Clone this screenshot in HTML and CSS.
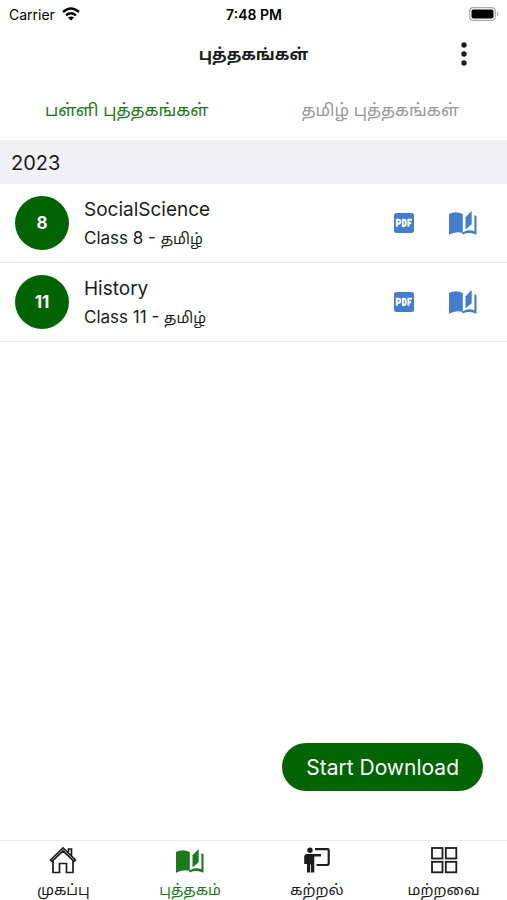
FILE: index.html
```html
<!DOCTYPE html>
<html lang="ta">
<head>
<meta charset="utf-8">
<meta name="viewport" content="width=device-width, initial-scale=1">
<title>புத்தகங்கள்</title>
<link rel="stylesheet" href="styles.css">
</head>
<body>
<svg class="defs" aria-hidden="true">
  <symbol id="book" viewBox="0 0 28 24">
    <path d="M0 3Q6.500 -.5 13.800 3V22Q7 19.700 0 23.800Z"/>
    <path d="M13 21.500L15 20.800Q20 18.200 25.400 20.200V4.300L27.500 5V23.800Q20.500 20.500 13.700 23.500Z"/>
    <path d="M16.500 6.200L22.700 0V13.200L16.500 18.500Z"/>
  </symbol>
  <symbol id="pdf" viewBox="0 0 20 20">
    <rect width="20" height="20" rx="2.500"/>
    <path d="M2.800 13.800V6.800H4.700Q6.300 6.800 6.300 8.800Q6.300 10.800 4.700 10.800H2.800M8.800 6.800V13H9.800Q11.700 13 11.700 10.900V8.900Q11.700 6.800 9.800 6.800ZM14.400 13.800V6.800H18M14.400 10.300H17.200" fill="none" stroke="#fff" stroke-width="1.900"/>
  </symbol>
</svg>
<div class="app">
  <div class="status">
    <div class="carrier">Carrier
      <svg class="wifi" viewBox="0 0 18 14" aria-hidden="true"><g fill="none" stroke="#000" stroke-width="2.400"><path d="M1 5Q9-2 17 5"/><path d="M4 8.300Q9 4 14 8.300"/></g><path d="M6 10.600Q9 8.300 12 10.600L9 13.600Z"/></svg>
    </div>
    <time>7:48 PM</time>
    <svg class="battery" viewBox="0 0 30 14" aria-hidden="true"><rect x=".7" y=".7" width="25.600" height="12.600" rx="3.500" fill="#fff" stroke="#aaa" stroke-width="1.200"/><rect x="2.500" y="2.500" width="22" height="9" rx="1.800"/><path d="M28 4.500Q31 7 28 9.500Z" fill="#aaa"/></svg>
  </div>
  <header class="header">
    <h1>புத்தகங்கள்</h1>
    <button class="more" aria-label="More"><svg viewBox="0 0 6 24" aria-hidden="true"><circle cx="3" cy="3" r="2.700"/><circle cx="3" cy="12" r="2.700"/><circle cx="3" cy="21" r="2.700"/></svg></button>
  </header>
  <nav class="tabs">
    <a class="active" href="#school">பள்ளி புத்தகங்கள்</a>
    <a href="#tamil">தமிழ் புத்தகங்கள்</a>
  </nav>
  <main>
    <h2>2023</h2>
    <ul>
      <li>
        <span class="badge">8</span>
        <div class="info"><h3>SocialScience</h3><p>Class 8 - <span class="ta">தமிழ்</span></p></div>
        <button class="pdf" aria-label="PDF"><svg viewBox="0 0 20 20"><use href="#pdf"/></svg></button>
        <button class="read" aria-label="Read"><svg viewBox="0 0 28 24"><use href="#book"/></svg></button>
      </li>
      <li>
        <span class="badge">11</span>
        <div class="info"><h3>History</h3><p>Class 11 - <span class="ta">தமிழ்</span></p></div>
        <button class="pdf" aria-label="PDF"><svg viewBox="0 0 20 20"><use href="#pdf"/></svg></button>
        <button class="read" aria-label="Read"><svg viewBox="0 0 28 24"><use href="#book"/></svg></button>
      </li>
    </ul>
  </main>
  <button class="download">Start Download</button>
  <nav class="bottom">
    <a href="#home"><svg viewBox="0 0 28 28" aria-hidden="true"><path d="M1.500 14L14 2L26.500 14L25 15.400L14 5L3 15.400ZM4 14.500V26.500H10.500V17.500H17.500V26.500H24V14.500M19.500 6V3H22.500V9.500" fill="none" stroke="currentColor" stroke-width="1.700"/></svg>முகப்பு</a>
    <a class="active" href="#books"><svg viewBox="0 0 28 28" aria-hidden="true"><use href="#book" y="3" width="28" height="24"/></svg>புத்தகம்</a>
    <a href="#learn"><svg viewBox="0 0 28 28" aria-hidden="true"><circle cx="7" cy="4.300" r="2.700"/><path d="M3.500 8H18V10.500H11.300V26.500H8V18.500H7.200V26.500H4V18H1.200V10.500Q1.200 8 3.500 8Z"/><path d="M12 3.200H24.500Q25.700 3.200 25.700 4.400V17.800Q25.700 19 24.500 19H13.500" fill="none" stroke="currentColor" stroke-width="2.200"/></svg>கற்றல்</a>
    <a href="#others"><svg viewBox="0 0 28 28" aria-hidden="true"><g fill="none" stroke="currentColor" stroke-width="1.800"><rect x="2" y="2" width="10.500" height="10.500"/><rect x="15.800" y="2" width="10.500" height="10.500"/><rect x="2" y="15.800" width="10.500" height="10.500"/><rect x="15.800" y="15.800" width="10.500" height="10.500"/></g></svg>மற்றவை</a>
  </nav>
</div>
</body>
</html>
```
FILE: styles.css
```css
* { box-sizing: border-box; }
body {
  margin: 0;
  background: #fff;
  color: #1c1c1c;
  font-family: Inter, "Noto Sans Tamil", "Noto Sans", sans-serif;
}
h1, h2, h3, p, ul { margin: 0; padding: 0; font-weight: 400; }
button { border: 0; padding: 0; background: none; font: inherit; color: inherit; }
a { color: inherit; text-decoration: none; }
svg { display: block; flex-shrink: 0; fill: currentColor; }
.defs { position: absolute; width: 0; height: 0; }
.app { min-height: 100vh; display: flex; flex-direction: column; }
.status {
  height: 28px;
  padding: 0 8px 0 9px;
  display: grid;
  grid-template-columns: 1fr auto 1fr;
  align-items: center;
  font-size: 14px;
  color: #000;
}
.carrier { display: flex; align-items: center; gap: 7px; }
.wifi { width: 18px; height: 14px; }
.status time { font-weight: 600; }
.battery { width: 30px; height: 14px; justify-self: end; }
.header {
  height: 52px;
  padding: 0 31px;
  display: grid;
  grid-template-columns: 1fr auto 1fr;
  align-items: center;
}
.header h1 { grid-column: 2; font-size: 16px; line-height: 24px; font-weight: 700; }
.more { justify-self: end; width: 24px; height: 32px; display: grid; place-items: center; }
.more svg { width: 6px; height: 24px; }
.tabs { height: 60px; padding-top: 2px; display: flex; align-items: center; font-size: 17px; color: #999; }
.tabs a { flex: 1; text-align: center; }
.active { color: #1b7a1b; }
h2 { height: 44px; padding: 0 11px; background: #f0f0f5; font-size: 20px; line-height: 46px; }
ul { list-style: none; }
li {
  height: 79px;
  padding: 0 30px 0 15px;
  display: flex;
  align-items: center;
  border-bottom: 1px solid #e4e4e6;
}
.badge {
  width: 54px;
  height: 54px;
  border-radius: 50%;
  background: #006400;
  color: #fff;
  display: grid;
  place-items: center;
  font-size: 17px;
  font-weight: 700;
}
.info { flex: 1; margin-left: 15px; padding-top: 2px; }
h3 { font-size: 19px; line-height: 28px; }
.info p { font-size: 17px; line-height: 28px; }
.info .ta { font-size: 15px; }
.pdf, .read { color: #427ecd; }
.pdf svg { width: 20px; height: 20px; }
.read { margin-left: 35px; }
.read svg { width: 28px; height: 24px; }
.download {
  margin: auto 24px 49px auto;
  height: 48px;
  padding: 0 24px;
  border-radius: 24px;
  background: #006400;
  color: #fff;
  font-size: 21px;
}
.bottom {
  height: 60px;
  border-top: 1px solid #ececec;
  display: flex;
  font-size: 15px;
}
.bottom a {
  flex: 1;
  padding-top: 5px;
  display: flex;
  flex-direction: column;
  align-items: center;
  gap: 6px;
  line-height: 20px;
}
.bottom svg { width: 28px; height: 28px; }
```
